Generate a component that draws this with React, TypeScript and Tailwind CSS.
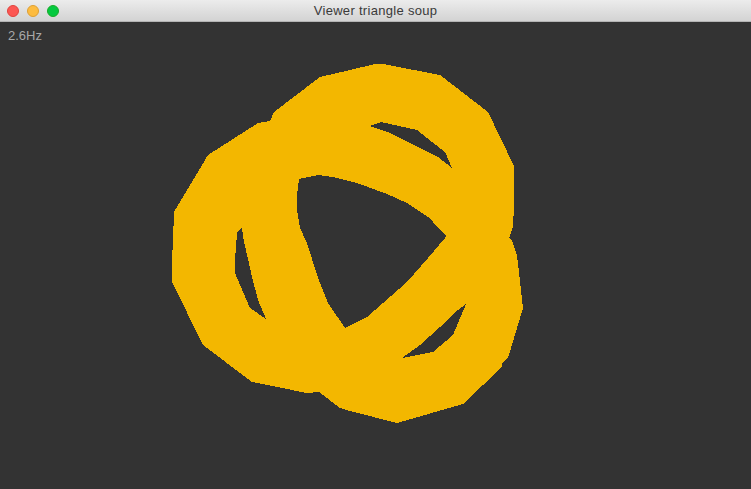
const OUTLINE =
	"M174 212 L208 155 L258 123 L270 121 L274 112 L320 77 L350 70 L375 64 L383 64 L440 75 L488 112 L514 166 L514 205 L513 227 L509 238 L512 240 L517 255 L523 308 L508 358 L502 363 L502 367 L463 404 L397 423 L350 411 L340 408 L319 392 L307 393 L252 382 L203 345 L172 282 L172 261 L173 240 Z"
const CENTER_HOLE =
	"M299 179 L318 175 L333 177 L357 183 L387 194 L407 203 L428 217 L433 222 L446 236 L445 238 L428 258 L407 282 L383 303 L367 317 L345 328 L328 303 L318 278 L307 243 L300 228 L297 210 L297 195 Z"
const TOP_HOLE =
	"M369 126 L381 122 L417 130 L427 138 L445 152 L452 168 L438 157 L410 143 L390 133 Z"
const LEFT_HOLE =
	"M242 227 L237 233 L235 260 L235 273 L250 308 L266 319 L258 300 L252 277 L243 237 Z"
const BOTTOM_HOLE =
	"M466 304 L453 335 L433 352 L402 358 L420 345 L440 327 L458 310 Z"

function TitleBar() {
	return (
		<div className="grid h-[22px] grid-cols-[1fr_auto_1fr] items-center border-b border-[#b4b4b4] bg-gradient-to-b from-[#ececec] to-[#d3d3d3]">
			{/* Traffic lights */}
			<div className="flex items-center gap-2 pl-[7px]">
				<span className="h-3 w-3 rounded-full border border-[#e0443e] bg-[#fc5753]" />
				<span className="h-3 w-3 rounded-full border border-[#dea034] bg-[#fdbc40]" />
				<span className="h-3 w-3 rounded-full border border-[#1aab29] bg-[#05c940]" />
			</div>
			<span className="font-['Liberation_Sans',sans-serif] text-[13px] leading-none tracking-[0.3px] text-[#3a3a3a]">
				Viewer triangle soup
			</span>
			<div />
		</div>
	)
}

export default function App() {
	return (
		<div className="flex h-[489px] w-[751px] flex-col overflow-hidden bg-[#333333]">
			<TitleBar />
			<div className="relative h-[467px]">
				<svg
					viewBox="0 22 751 467"
					className="block h-[467px] w-[751px]"
					shapeRendering="crispEdges"
				>
					<path
						fillRule="evenodd"
						fill="#f3b700"
						d={`${OUTLINE} ${CENTER_HOLE} ${TOP_HOLE} ${LEFT_HOLE} ${BOTTOM_HOLE}`}
					/>
				</svg>
				<span className="absolute left-2 top-[6px] font-['Liberation_Sans',sans-serif] text-[13px] leading-[15px] text-[#a8a8a8]">
					2.6Hz
				</span>
			</div>
		</div>
	)
}
